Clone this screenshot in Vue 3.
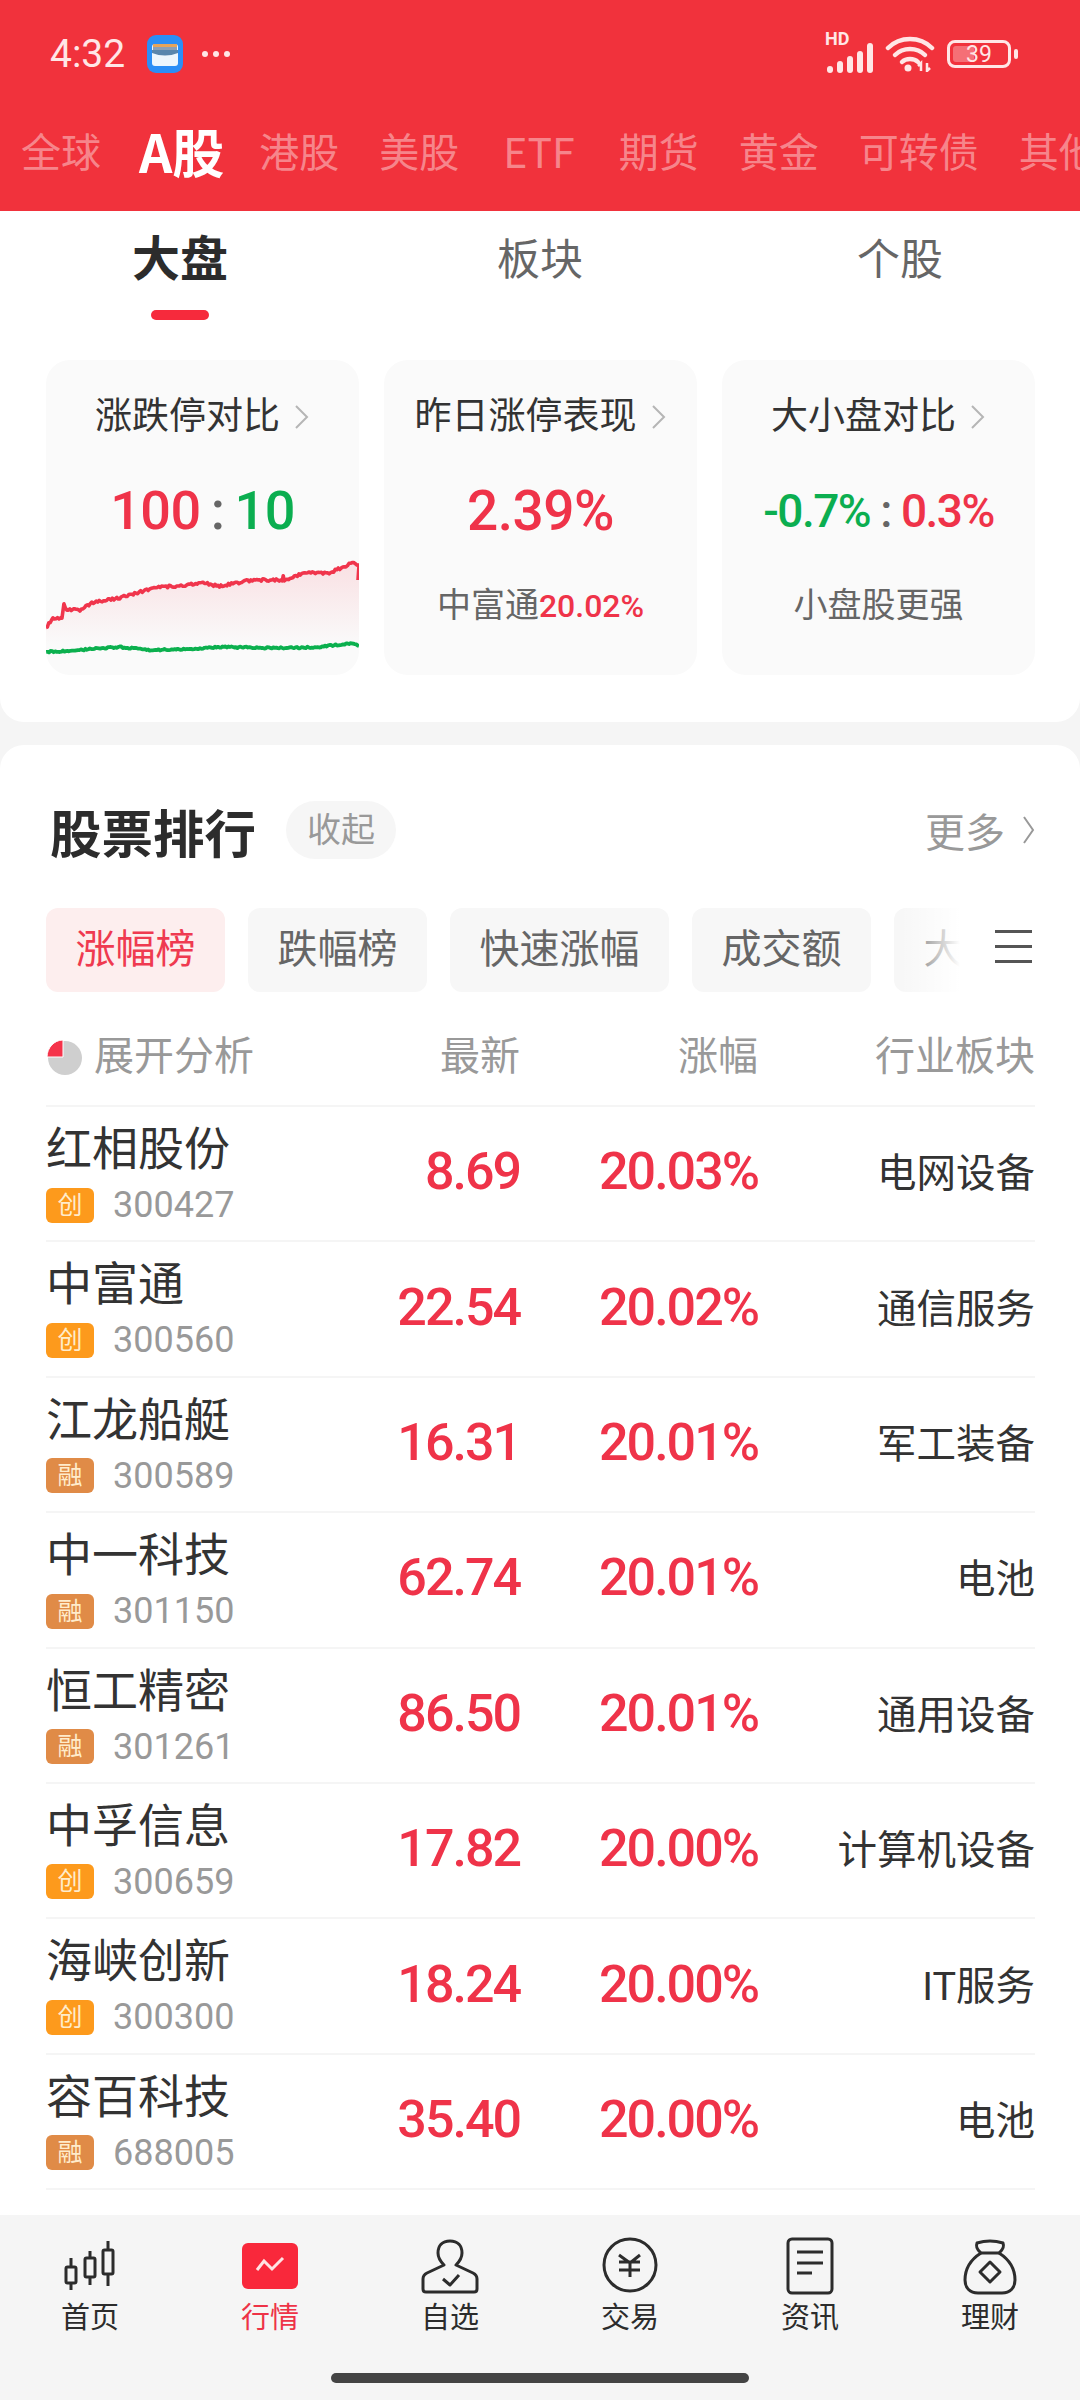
<template>
  <div class="page">
    <!-- 顶部红色区域 -->
    <header class="top">
      <div class="status">
        <span class="time">4:32</span>
        <svg class="wallet" width="38" height="38" viewBox="0 0 38 38">
          <rect x="1" y="0" width="36" height="38" rx="9" fill="#2b8ef6" />
          <rect x="6" y="9" width="26" height="22" rx="3" fill="#eef6fd" />
          <rect x="7" y="9" width="24" height="3" fill="#e8a45a" />
          <rect x="7" y="12" width="24" height="3" fill="#8d9fb5" />
          <path d="M6 15h26v3q-13 5-26 0z" fill="#5a86ad" />
        </svg>
        <span class="dots"><i></i><i></i><i></i></span>
        <div class="status-right">
          <div class="signal">
            <span class="hd">HD</span>
            <svg width="50" height="32" viewBox="0 0 50 32">
              <g fill="#ffe6e6">
                <rect x="4" y="24" width="6" height="7" rx="3" />
                <rect x="14" y="19" width="6" height="12" rx="3" />
                <rect x="24" y="14" width="6" height="17" rx="3" />
                <rect x="34" y="9" width="6" height="22" rx="3" />
                <rect x="44" y="1" width="6" height="30" rx="3" />
              </g>
            </svg>
          </div>
          <svg class="wifi" width="50" height="36" viewBox="0 0 50 36">
            <g fill="none" stroke="#ffe6e6" stroke-width="4.5" stroke-linecap="round">
              <path d="M3 12C15 0 35 0 47 12" />
              <path d="M10 19C18 11 32 11 40 19" />
              <path d="M17 26C21 22 29 22 33 26" />
            </g>
            <circle cx="23" cy="32" r="3.5" fill="#ffe6e6" />
            <path d="M36 35v-8l-3 3M42 27v8l3-3" fill="none" stroke="#ffe6e6" stroke-width="2.5" />
          </svg>
          <div class="battery">
            <div class="battery-body">
              <div class="battery-fill"></div>
              <span>39</span>
            </div>
            <div class="battery-nub"></div>
          </div>
        </div>
      </div>
      <nav class="market-tabs">
        <span v-for="t in marketTabs" :key="t" :class="{ active: t === 'A股', latin: t === 'ETF' }">{{ t }}</span>
      </nav>
    </header>

    <!-- 大盘 -->
    <section class="overview">
      <div class="sub-tabs">
        <div v-for="t in subTabs" :key="t" class="sub-tab" :class="{ active: t === '大盘' }">
          <span>{{ t }}</span>
          <i></i>
        </div>
      </div>
      <div class="cards">
        <div class="card">
          <div class="card-title">涨跌停对比<svg class="chev" width="16" height="26" viewBox="0 0 16 26"><path d="M2 2l11 11-11 11" /></svg></div>
          <div class="card-value big">
            <span class="red">100</span><span class="colon">:</span><span class="green">10</span>
          </div>
          <svg class="chart" viewBox="0 0 314 120" preserveAspectRatio="none">
            <defs>
              <linearGradient id="areaFill" x1="0" y1="0" x2="0" y2="1">
                <stop offset="0" stop-color="#f2334a" stop-opacity="0.13" />
                <stop offset="1" stop-color="#f2334a" stop-opacity="0" />
              </linearGradient>
            </defs>
            <polygon :points="areaPoints" fill="url(#areaFill)" />
            <polyline :points="redPoints" fill="none" stroke="#f0354c" stroke-width="3.6" stroke-linejoin="round" />
            <polyline :points="greenPoints" fill="none" stroke="#0bb04e" stroke-width="3.8" stroke-linejoin="round" />
          </svg>
        </div>
        <div class="card">
          <div class="card-title">昨日涨停表现<svg class="chev" width="16" height="26" viewBox="0 0 16 26"><path d="M2 2l11 11-11 11" /></svg></div>
          <div class="card-value"><span class="red pct">2.39%</span></div>
          <div class="card-sub">中富通<span class="red num">20.02%</span></div>
        </div>
        <div class="card">
          <div class="card-title">大小盘对比<svg class="chev" width="16" height="26" viewBox="0 0 16 26"><path d="M2 2l11 11-11 11" /></svg></div>
          <div class="card-value small">
            <span class="green">-0.7%</span><span class="colon">:</span><span class="red">0.3%</span>
          </div>
          <div class="card-sub">小盘股更强</div>
        </div>
      </div>
    </section>

    <!-- 股票排行 -->
    <section class="rank">
      <div class="rank-head">
        <h2>股票排行</h2>
        <span class="fold">收起</span>
        <span class="more">更多<svg width="14" height="32" viewBox="0 0 14 32"><path d="M2 3l9 13-9 13" /></svg></span>
      </div>

      <div class="chips-wrap">
        <div class="chips">
          <span v-for="c in chips" :key="c" class="chip" :class="{ active: c === '涨幅榜' }">{{ c }}</span>
        </div>
        <div class="chips-fade"></div>
        <div class="menu"><i></i><i></i><i></i></div>
      </div>

      <div class="grid-row head-row">
        <div class="analysis">
          <svg width="36" height="36" viewBox="0 0 36 36">
            <circle cx="19" cy="19" r="17" fill="#cfcfcf" />
            <path d="M17 1v17H1C1 9 8 1 17 1z" fill="#f5334a" stroke="#fff" stroke-width="1" />
          </svg>
          <span>展开分析</span>
        </div>
        <div>最新</div>
        <div>涨幅</div>
        <div>行业板块</div>
      </div>

      <div v-for="s in stocks" :key="s.code" class="grid-row stock-row">
        <div class="stock-name">
          <div class="name">{{ s.name }}</div>
          <div class="code-line">
            <span class="badge" :class="s.tag === '融' ? 'rong' : 'chuang'">{{ s.tag }}</span>
            <span class="code">{{ s.code }}</span>
          </div>
        </div>
        <div class="price">{{ s.price }}</div>
        <div class="price">{{ s.pct }}</div>
        <div class="sector">{{ s.sector }}</div>
      </div>
    </section>

    <!-- 底部导航 -->
    <footer class="tabbar">
      <div class="tab-items">
        <div class="tab-item">
          <svg width="60" height="60" viewBox="0 0 60 60" class="ico">
            <path d="M11 22v9M11 47v7M30 15v7M30 41v8M48 5v9M48 38v12" />
            <rect x="6" y="31" width="10" height="16" rx="1.5" />
            <rect x="25" y="22" width="10" height="19" rx="1.5" />
            <rect x="43" y="14" width="10" height="24" rx="1.5" />
          </svg>
          <span>首页</span>
        </div>
        <div class="tab-item active">
          <svg width="60" height="60" viewBox="0 0 60 60">
            <rect x="2" y="7" width="56" height="46" rx="6" fill="#f9283b" />
            <path d="M17 34l7-9 8 8 11-11" fill="none" stroke="#ffe3e3" stroke-width="3" />
          </svg>
          <span>行情</span>
        </div>
        <div class="tab-item">
          <svg width="60" height="60" viewBox="0 0 60 60" class="ico">
            <path d="M30 5C22 5 18 10 18 17C18 22 21 26 24 29L7 37Q3 39 3 43V53Q3 56 6 56H54Q57 56 57 53V43Q57 39 53 37L36 29C39 26 42 22 42 17C42 10 38 5 30 5Z" />
            <path d="M23 43l7 6 9-10" />
          </svg>
          <span>自选</span>
        </div>
        <div class="tab-item">
          <svg width="60" height="60" viewBox="0 0 60 60" class="ico">
            <circle cx="30" cy="29" r="26" />
            <path d="M19 19l11 8 10-8M19 26h21M19 34h21M30 27v14" />
          </svg>
          <span>交易</span>
        </div>
        <div class="tab-item">
          <svg width="60" height="60" viewBox="0 0 60 60" class="ico">
            <rect x="8" y="3" width="44" height="54" rx="4" />
            <path d="M17 16h26M17 27h26M17 37h15" />
          </svg>
          <span>资讯</span>
        </div>
        <div class="tab-item">
          <svg width="60" height="60" viewBox="0 0 60 60" class="ico">
            <path d="M17 7Q30 3 43 7Q45 12 39 17H21Q15 12 17 7Z" />
            <path d="M21 17C10 24 5 34 5 44C5 52 10 57 18 57H42C50 57 55 52 55 44C55 34 50 24 39 17" />
            <path d="M30 26l10 10-10 10-10-10z" />
          </svg>
          <span>理财</span>
        </div>
      </div>
      <div class="home-bar"></div>
    </footer>
  </div>
</template>

<script setup>
const marketTabs = ['全球', 'A股', '港股', '美股', 'ETF', '期货', '黄金', '可转债', '其他']
const subTabs = ['大盘', '板块', '个股']
const chips = ['涨幅榜', '跌幅榜', '快速涨幅', '成交额', '大单']

const stocks = [
  { name: '红相股份', tag: '创', code: '300427', price: '8.69', pct: '20.03%', sector: '电网设备' },
  { name: '中富通', tag: '创', code: '300560', price: '22.54', pct: '20.02%', sector: '通信服务' },
  { name: '江龙船艇', tag: '融', code: '300589', price: '16.31', pct: '20.01%', sector: '军工装备' },
  { name: '中一科技', tag: '融', code: '301150', price: '62.74', pct: '20.01%', sector: '电池' },
  { name: '恒工精密', tag: '融', code: '301261', price: '86.50', pct: '20.01%', sector: '通用设备' },
  { name: '中孚信息', tag: '创', code: '300659', price: '17.82', pct: '20.00%', sector: '计算机设备' },
  { name: '海峡创新', tag: '创', code: '300300', price: '18.24', pct: '20.00%', sector: 'IT服务' },
  { name: '容百科技', tag: '融', code: '688005', price: '35.40', pct: '20.00%', sector: '电池' }
]

// 折线锚点，后面加一点抖动
const redAnchors = [[0, 73], [7, 63], [16, 63], [18, 50], [21, 55], [34, 55], [46, 48], [74, 43], [107, 33], [131, 31], [156, 28], [174, 31], [207, 25], [237, 25], [238, 20], [239, 25], [261, 17], [284, 18], [307, 8], [312, 9], [314, 10]]
const greenAnchors = [[0, 97], [17, 96], [74, 92], [104, 95], [147, 94], [174, 92], [240, 93], [274, 92], [307, 88], [314, 91]]

function noisy(anchors, amp, seed) {
  let s = seed
  const pts = []
  for (let i = 0; i < anchors.length - 1; i++) {
    const [x0, y0] = anchors[i]
    const [x1, y1] = anchors[i + 1]
    const n = Math.max(1, Math.round((x1 - x0) / 1.5))
    for (let j = 0; j < n; j++) {
      s = (s * 16807) % 2147483647
      const t = j / n
      const y = y0 + (y1 - y0) * t + ((s % 1000) / 1000 - 0.5) * amp
      pts.push((x0 + (x1 - x0) * t).toFixed(1) + ',' + y.toFixed(1))
    }
  }
  const last = anchors[anchors.length - 1]
  pts.push(last[0] + ',' + last[1])
  return pts
}

const red = noisy(redAnchors, 2.6, 4242)
const redPoints = [...red, '313,25'].join(' ')
const greenPoints = noisy(greenAnchors, 1.6, 977).join(' ')
const areaPoints = [...red, '314,90', '0,90'].join(' ')
</script>

<style>
html, body { margin: 0; padding: 0; background: #f5f5f5; }
</style>

<style scoped>
.page {
  width: 1080px;
  height: 2400px;
  display: flex;
  flex-direction: column;
  overflow: hidden;
  background: #f5f5f5;
  font-family: Roboto, "Noto Sans CJK SC", sans-serif;
  color: #333;
}

.top {
  height: 211px;
  background: #f1323c;
  flex-shrink: 0;
  overflow: hidden;
}

.status {
  height: 108px;
  display: flex;
  align-items: center;
  padding: 0 62px 0 50px;
  color: #ffe6e6;
}

.time {
  font-size: 39px;
  width: 96px;
}

.wallet { flex-shrink: 0; }

.dots {
  display: flex;
  gap: 5px;
  margin-left: 18px;
}
.dots i {
  width: 6px;
  height: 6px;
  border-radius: 50%;
  background: #ffe6e6;
}

.status-right {
  margin-left: auto;
  display: flex;
  align-items: center;
  gap: 12px;
}

.signal {
  position: relative;
  width: 50px;
  height: 32px;
  margin-top: 8px;
}
.signal svg { display: block; }
.hd {
  position: absolute;
  left: 2px;
  top: -10px;
  font-size: 18px;
  line-height: 14px;
  font-weight: 700;
}

.battery {
  display: flex;
  align-items: center;
  gap: 3px;
}
.battery-body {
  position: relative;
  width: 64px;
  height: 28px;
  box-sizing: border-box;
  border: 3px solid #ffe6e6;
  border-radius: 8px;
  padding: 2px;
  text-align: center;
}
.battery-fill {
  position: absolute;
  left: 3px;
  top: 3px;
  bottom: 3px;
  width: 21px;
  border-radius: 3px;
  background: rgba(255, 255, 255, 0.3);
}
.battery-body span {
  position: relative;
  display: block;
  font-size: 23px;
  line-height: 19px;
}
.battery-nub {
  width: 4px;
  height: 10px;
  border-radius: 2px;
  background: #ffe6e6;
}

.market-tabs {
  display: flex;
  align-items: center;
  gap: 40px;
  height: 84px;
  padding-left: 21px;
  white-space: nowrap;
  font-family: "Noto Sans CJK SC", sans-serif;
  font-size: 40px;
  color: rgba(255, 255, 255, 0.42);
}
.market-tabs span { flex-shrink: 0; }
.market-tabs .active {
  font-size: 52px;
  font-weight: 700;
  color: #fff;
  margin: 0 -5px 0 -2px;
}
.market-tabs .latin {
  font-size: 41px;
  padding: 0 4px;
}

.overview {
  flex-shrink: 0;
  background: #fff;
  border-radius: 0 0 24px 24px;
  padding: 19px 45px 47px 46px;
  margin-bottom: 23px;
}

.sub-tabs {
  display: flex;
  margin: 0 -45px 40px -46px;
}
.sub-tab {
  flex: 1;
  display: flex;
  flex-direction: column;
  align-items: center;
  font-size: 43px;
  line-height: 60px;
  color: #666;
}
.sub-tab i {
  display: block;
  width: 58px;
  height: 10px;
  margin-top: 20px;
  border-radius: 5px;
}
.sub-tab.active { color: #2c2c2c; font-size: 48px; font-weight: 700; }
.sub-tab.active i { background: #f62a3c; }

.cards {
  display: grid;
  grid-template-columns: repeat(3, 1fr);
  gap: 25px;
}

.card {
  height: 315px;
  box-sizing: border-box;
  padding-top: 32px;
  background: #fafafa;
  border-radius: 24px;
  overflow: hidden;
  text-align: center;
}

.card-title {
  display: flex;
  justify-content: center;
  align-items: center;
  gap: 14px;
  font-size: 37px;
  line-height: 50px;
  color: #333;
}
.chev, .more svg {
  fill: none;
  stroke: #b5b5b5;
  stroke-width: 2;
}

.card-value {
  margin-top: 39px;
  height: 60px;
  line-height: 60px;
  font-size: 54px;
  font-weight: 500;
  letter-spacing: -0.5px;
  white-space: nowrap;
}
.card-value.small { font-size: 46px; letter-spacing: -1.5px; }
.card-value .pct { font-size: 55px; letter-spacing: -0.5px; }
.colon {
  margin: 0 10px;
  color: #666;
}
.red { color: #ef3349; }
.green { color: #0bae50; }

.chart {
  display: block;
  width: 100%;
  height: 120px;
  margin-top: 14px;
}

.card-sub {
  margin-top: 39px;
  font-size: 34px;
  line-height: 50px;
  color: #666;
  white-space: nowrap;
}
.card-sub .num { font-weight: 500; font-size: 32px; }

.rank {
  flex: 1;
  min-height: 0;
  background: #fff;
  border-radius: 24px 24px 0 0;
  padding: 55px 45px 0 46px;
  overflow: hidden;
}

.rank-head {
  display: flex;
  align-items: center;
  height: 60px;
}
.rank-head h2 {
  margin: 0 0 0 4px;
  font-size: 51.5px;
  font-weight: 700;
  color: #2c2c2c;
}
.fold {
  margin-left: 30px;
  width: 110px;
  height: 58px;
  line-height: 58px;
  text-align: center;
  border-radius: 29px;
  background: #f6f6f6;
  color: #999;
  font-size: 34px;
}
.more {
  margin-left: auto;
  display: flex;
  align-items: center;
  gap: 17px;
  font-size: 40px;
  color: #999;
}
.more svg { stroke: #999; margin-right: -1px; }

.chips-wrap {
  position: relative;
  margin-top: 48px;
  height: 84px;
}
.chips {
  display: flex;
  gap: 23px;
  width: 914px;
  overflow: hidden;
}
.chip {
  flex-shrink: 0;
  height: 84px;
  line-height: 84px;
  padding: 0 29.5px;
  border-radius: 12px;
  background: #f7f7f7;
  color: #666;
  font-size: 40px;
}
.chip.active {
  background: #fdeeee;
  color: #ef3a50;
}
.chips-fade {
  position: absolute;
  top: 0;
  right: 75px;
  width: 60px;
  height: 84px;
  background: linear-gradient(to right, rgba(255, 255, 255, 0), #fff);
}
.menu {
  position: absolute;
  right: 3px;
  top: 22px;
  width: 37px;
  height: 33px;
  display: flex;
  flex-direction: column;
  justify-content: space-between;
}
.menu i {
  display: block;
  height: 3px;
  background: #555;
}

.grid-row {
  display: grid;
  grid-template-columns: 300px 174px 238px 1fr;
  align-items: center;
  text-align: right;
}

.head-row {
  margin-top: 40px;
  padding-bottom: 23px;
  border-bottom: 2px solid #f5f5f5;
  line-height: 50px;
  font-size: 40px;
  color: #999;
}
.analysis {
  display: flex;
  align-items: center;
  gap: 12px;
  text-align: left;
}
.analysis svg { flex-shrink: 0; }

.stock-row {
  height: 135.4px;
  box-sizing: border-box;
  border-bottom: 2px solid #f5f5f5;
}
.stock-name {
  align-self: start;
  padding-top: 13px;
  text-align: left;
}
.name {
  font-size: 46px;
  line-height: 58px;
  color: #333;
  white-space: nowrap;
}
.code-line {
  display: flex;
  align-items: center;
  gap: 19px;
  margin-top: 7px;
}
.badge {
  width: 48px;
  height: 35px;
  line-height: 35px;
  border-radius: 6px;
  text-align: center;
  font-size: 25px;
  color: #ffeccb;
}
.chuang { background: #fd9a1c; }
.rong { background: #e08b47; }
.code {
  font-size: 36px;
  line-height: 40px;
  color: #999;
}
.price {
  font-size: 52px;
  font-weight: 500;
  letter-spacing: -2px;
  padding-bottom: 4px;
  color: #ef3349;
}
.sector {
  font-size: 39.5px;
  padding-bottom: 8px;
  color: #333;
  white-space: nowrap;
}

.tabbar {
  flex-shrink: 0;
  height: 185px;
  background: #f5f5f5;
}
.tab-items {
  display: grid;
  grid-template-columns: repeat(6, 1fr);
  padding-top: 21px;
}
.tab-item {
  display: flex;
  flex-direction: column;
  align-items: center;
  font-size: 29px;
  line-height: 38px;
  color: #2c2c2c;
}
.tab-item svg { display: block; margin-bottom: 3px; }
.tab-item.active { color: #ee3347; }
.ico {
  fill: none;
  stroke: #2c2c2c;
  stroke-width: 3;
  stroke-linejoin: round;
}
.home-bar {
  width: 418px;
  height: 10px;
  margin: 36px auto 0;
  border-radius: 5px;
  background: #444;
}
</style>
